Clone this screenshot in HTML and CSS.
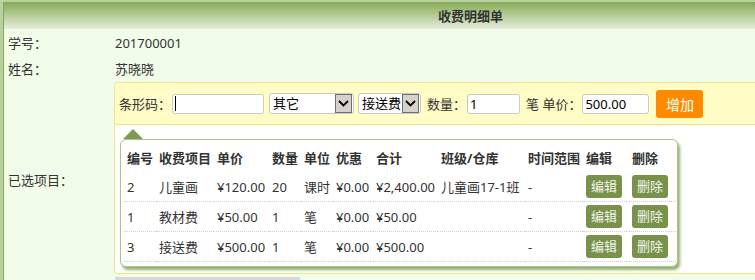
FILE: index.html
```html
<!DOCTYPE html>
<html lang="zh-CN">
<head>
    <meta charset="UTF-8">
    <meta name="viewport" content="width=device-width, initial-scale=1.0">
    <title>收费明细单</title>
    <link rel="stylesheet" href="styles.css">
</head>
<body>
    <div class="page">
        <div class="frame">
            <div class="title-bar">收费明细单</div>
            <div class="rows">
                <div class="row info-row">
                    <div class="label">学号：</div>
                    <div class="value">201700001</div>
                </div>
                <div class="row info-row">
                    <div class="label">姓名：</div>
                    <div class="value">苏晓晓</div>
                </div>
                <div class="row items-row">
                    <div class="label">已选项目：</div>
                    <div class="picker">
                        <div class="toolbar">
                            <span class="tool-text">条形码：</span>
                            <input type="text" class="field field-barcode" value="">
                            <span class="select select-type">
                                <span>其它</span>
                                <span class="arrow"><svg width="13" height="13" viewBox="0 0 13 13"><path d="M2 4 L6.5 8.5 L11 4" fill="none" stroke="#000" stroke-width="1.8"/></svg></span>
                            </span>
                            <span class="select select-item">
                                <span>接送费</span>
                                <span class="arrow"><svg width="13" height="13" viewBox="0 0 13 13"><path d="M2 4 L6.5 8.5 L11 4" fill="none" stroke="#000" stroke-width="1.8"/></svg></span>
                            </span>
                            <span class="tool-text gap-left">数量：</span>
                            <input type="text" class="field field-qty" value="1">
                            <span class="tool-text gap-left">笔 单价：</span>
                            <input type="text" class="field field-price" value="500.00">
                            <button class="btn-add">增加</button>
                        </div>
                        <div class="list-area">
                            <div class="popup">
                                <table class="items">
                                    <colgroup>
                                        <col style="width: 32px">
                                        <col style="width: 58px">
                                        <col style="width: 55px">
                                        <col style="width: 32px">
                                        <col style="width: 32px">
                                        <col style="width: 40px">
                                        <col style="width: 65px">
                                        <col style="width: 87px">
                                        <col style="width: 58px">
                                        <col style="width: 46px">
                                        <col style="width: 47px">
                                    </colgroup>
                                    <thead>
                                        <tr>
                                            <th>编号</th>
                                            <th>收费项目</th>
                                            <th>单价</th>
                                            <th>数量</th>
                                            <th>单位</th>
                                            <th>优惠</th>
                                            <th>合计</th>
                                            <th>班级/仓库</th>
                                            <th>时间范围</th>
                                            <th>编辑</th>
                                            <th>删除</th>
                                        </tr>
                                    </thead>
                                    <tbody>
                                        <tr>
                                            <td>2</td>
                                            <td>儿童画</td>
                                            <td>¥120.00</td>
                                            <td>20</td>
                                            <td>课时</td>
                                            <td>¥0.00</td>
                                            <td>¥2,400.00</td>
                                            <td>儿童画17-1班</td>
                                            <td>-</td>
                                            <td><span class="btn-op">编辑</span></td>
                                            <td><span class="btn-op">删除</span></td>
                                        </tr>
                                        <tr>
                                            <td>1</td>
                                            <td>教材费</td>
                                            <td>¥50.00</td>
                                            <td>1</td>
                                            <td>笔</td>
                                            <td>¥0.00</td>
                                            <td>¥50.00</td>
                                            <td></td>
                                            <td>-</td>
                                            <td><span class="btn-op">编辑</span></td>
                                            <td><span class="btn-op">删除</span></td>
                                        </tr>
                                        <tr>
                                            <td>3</td>
                                            <td>接送费</td>
                                            <td>¥500.00</td>
                                            <td>1</td>
                                            <td>笔</td>
                                            <td>¥0.00</td>
                                            <td>¥500.00</td>
                                            <td></td>
                                            <td>-</td>
                                            <td><span class="btn-op">编辑</span></td>
                                            <td><span class="btn-op">删除</span></td>
                                        </tr>
                                    </tbody>
                                </table>
                            </div>
                        </div>
                    </div>
                </div>
                <div class="row">
                    <div class="label"></div>
                    <div class="next-bar"></div>
                </div>
            </div>
        </div>
    </div>
</body>
</html>
```

FILE: styles.css
```css
html, body {
    margin: 0;
    overflow: hidden;
}
body {
    font-family: "Noto Sans", "Noto Sans CJK SC", sans-serif;
    font-size: 13px;
    color: #333;
    background-color: #f2fde9;
}
.page {
    width: 934px;
    padding: 2px 0 0 3px;
    background-color: #b9d0a0;
}
.frame {
    border-left: 1px solid #86a95c;
    border-top: 1px solid #86a95c;
    background-color: #f2fde9;
    height: 277px;
    overflow: hidden;
}
.title-bar {
    height: 26px;
    line-height: 26px;
    text-align: center;
    font-weight: bold;
    color: #333;
    background: linear-gradient(#88ad59, #e7eddc);
}
.rows {
    padding-top: 1px;
}
.row {
    display: grid;
    grid-template-columns: 110px 1fr;
}
.info-row {
    height: 26px;
    line-height: 26px;
}
.label {
    padding-left: 4px;
    align-self: center;
}
.value {
    padding-left: 1px;
}
.picker {
    border: 1px solid #ece78a;
    border-right: none;
    border-radius: 4px 0 0 4px;
    background-color: #fff;
    margin-bottom: 3px;
}
.toolbar {
    height: 41px;
    display: flex;
    align-items: center;
    padding-left: 4px;
    background-color: #fffcc6;
    border-bottom: 1px solid #ece78a;
    border-top-left-radius: 4px;
}
.tool-text {
    white-space: nowrap;
    line-height: 20px;
}
.gap-left {
    margin-left: 6px;
}
.field {
    box-sizing: border-box;
    height: 20px;
    border: 1px solid #c9c9c9;
    border-radius: 3px;
    padding: 0 2px;
    font: inherit;
    font-size: 13px;
    color: #000;
    background-color: #fff;
    outline: none;
}
.field-barcode {
    width: 92px;
    margin-left: 1px;
    background: #fff linear-gradient(#000, #000) no-repeat 2px center / 1px 15px;
}
.field-qty {
    width: 53px;
    margin-left: 1px;
}
.field-price {
    width: 67px;
    margin-left: 1px;
}
.select {
    box-sizing: border-box;
    height: 21px;
    display: inline-flex;
    align-items: center;
    justify-content: space-between;
    border: 1px solid #c9c9c9;
    border-radius: 3px;
    background-color: #fff;
    padding-left: 3px;
    font-size: 13px;
    color: #000;
    line-height: 19px;
    white-space: nowrap;
}
.select-type {
    width: 85px;
    margin-left: 5px;
}
.select-item {
    width: 63px;
    margin-left: 4px;
}
.arrow {
    box-sizing: border-box;
    flex-shrink: 0;
    width: 17px;
    height: 19px;
    margin-right: 1px;
    border: 1px solid #6f6f6f;
    background-color: #d6d2cb;
    display: flex;
    align-items: center;
    justify-content: center;
}
.btn-add {
    width: 47px;
    height: 28px;
    margin-left: 7px;
    border: none;
    border-radius: 3px;
    background-color: #ff8a00;
    color: white;
    font: inherit;
    font-size: 14px;
    padding: 0;
}
.list-area {
    padding: 14px 0 6px 5px;
}
.popup {
    position: relative;
    width: 552px;
    padding: 3px 1px 4px 3px;
    border: 1px solid #a8c48c;
    border-radius: 6px;
    box-shadow: 2px 3px 3px #93b170;
    background-color: #fff;
}
.popup::before {
    content: "";
    position: absolute;
    top: -11px;
    left: 2px;
    border-left: 10px solid transparent;
    border-right: 10px solid transparent;
    border-bottom: 10px solid #7b9c52;
}
.items {
    width: 552px;
    table-layout: fixed;
    border-collapse: collapse;
}
.items th, .items td {
    padding: 0 0 0 3px;
    text-align: left;
    white-space: nowrap;
    color: #333;
}
.items th {
    height: 29px;
    font-weight: bold;
}
.items td {
    height: 29px;
    border-bottom: 1px dotted #cfcfcf;
}
.btn-op {
    display: inline-block;
    width: 36px;
    height: 23px;
    line-height: 23px;
    text-align: center;
    vertical-align: middle;
    border-radius: 3px;
    background-color: #78924b;
    color: #f2f4ea;
}
.next-bar {
    width: 185px;
    height: 8px;
    margin-left: 1px;
    background-color: #d8d8d8;
}
```
